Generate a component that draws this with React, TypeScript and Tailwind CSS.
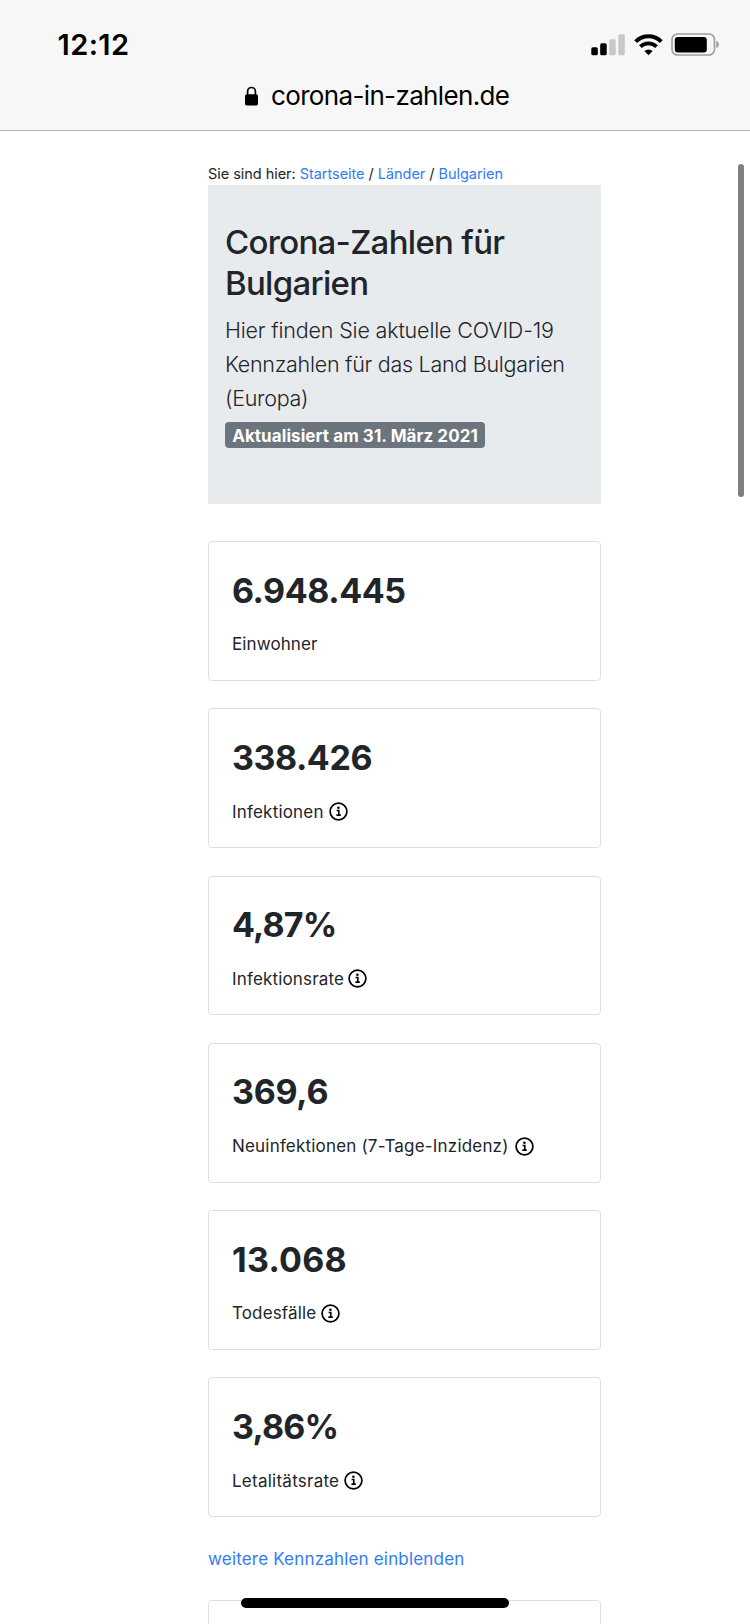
type Stat = {
  value: string;
  label: string;
  info: boolean;
  valueClass: string;
  labelClass: string;
};

const stats: Stat[] = [
  { value: "6.948.445", label: "Einwohner", info: false, valueClass: "tracking-[-0.45px]", labelClass: "tracking-[0.1px]" },
  { value: "338.426", label: "Infektionen", info: true, valueClass: "tracking-[-0.45px]", labelClass: "tracking-[0.2px]" },
  { value: "4,87%", label: "Infektionsrate", info: true, valueClass: "tracking-[-0.85px]", labelClass: "tracking-[0.16px] mr-[-0.7px]" },
  { value: "369,6", label: "Neuinfektionen (7-Tage-Inzidenz)", info: true, valueClass: "tracking-[-0.25px]", labelClass: "tracking-[0.19px] mr-[1px]" },
  { value: "13.068", label: "Todesfälle", info: true, valueClass: "tracking-[0.25px]", labelClass: "tracking-[0.14px] mr-[-0.7px]" },
  { value: "3,86%", label: "Letalitätsrate", info: true, valueClass: "tracking-[-0.85px]", labelClass: "tracking-[0.25px]" },
];

function InfoIcon() {
  return (
    <svg className="w-[19px] h-[19px] ml-[5px] shrink-0" viewBox="0 0 19 19" fill="none">
      <circle cx="9.5" cy="9.5" r="8.4" stroke="#000" strokeWidth="1.7" />
      <circle cx="9.4" cy="5.8" r="1.3" fill="#000" />
      <path d="M7.6 8.5H9.8V12.8M7.4 13.1H11.8" stroke="#000" strokeWidth="1.6" />
    </svg>
  );
}

function StatCard({ stat }: { stat: Stat }) {
  return (
    <div className="h-[139.8px] border border-[#dfdfdf] rounded-[4px] pl-[23px] pt-[27.5px]">
      <div className={`text-[34px] leading-[42px] font-bold ${stat.valueClass}`}>{stat.value}</div>
      <div className="flex items-center h-[26px] mt-[19.8px]">
        <span className={`text-[17px] leading-[26px] ${stat.labelClass}`}>{stat.label}</span>
        {stat.info && <InfoIcon />}
      </div>
    </div>
  );
}

function StatusBar() {
  return (
    <div className="flex items-center justify-between h-[90px] pl-[57.5px] pr-[30px]">
      <span className="text-[29px] leading-[36px] font-semibold tracking-[0.4px]">12:12</span>
      <div className="flex items-center">
        <svg className="w-[34px] h-[22px]" viewBox="0 0 34 22">
          <rect x="0.3" y="13.2" width="6.5" height="8" rx="1.5" />
          <rect x="9.2" y="9.2" width="6.5" height="12" rx="1.5" />
          <rect x="18.2" y="5.2" width="6.5" height="16" rx="1.5" fill="#c8c8c8" />
          <rect x="27.3" y="0.2" width="6.5" height="21" rx="1.5" fill="#c8c8c8" />
        </svg>
        <svg className="w-[29px] h-[22px] ml-[8.5px]" viewBox="0 0 29 22" fill="none">
          <path d="M1.7 7.6A18.2 18.2 0 0 1 27.3 7.6" stroke="#000" strokeWidth="4" />
          <path d="M6.4 12.6A11.6 11.6 0 0 1 22.6 12.6" stroke="#000" strokeWidth="3.8" />
          <path d="M14.5 21.2L10.4 17.1A6 6 0 0 1 18.6 17.1Z" fill="#000" />
        </svg>
        <svg className="w-[49px] h-[24px] ml-[8.5px]" viewBox="0 0 49 24" fill="none">
          <rect x="1" y="1" width="42.5" height="21" rx="5.5" stroke="#9d9d9d" strokeWidth="1.6" />
          <rect x="3.8" y="4" width="32" height="15.5" rx="3" fill="#000" />
          <path d="M45.3 8C48.8 9.1 48.8 13.9 45.3 15Z" fill="#9d9d9d" />
        </svg>
      </div>
    </div>
  );
}

export default function App() {
  return (
    <div className="relative w-[750px] h-[1624px] overflow-hidden bg-white text-[#212529] font-[Inter,sans-serif]">
      <header className="h-[131px] bg-[#f7f7f7] border-b border-[#b2b2b2] text-black">
        <StatusBar />
        <div className="flex items-center h-[12px] pl-[245px]">
          <svg className="w-[13px] h-[20px]" viewBox="0 0 13 20" fill="none">
            <path d="M2.6 9V5.5a3.9 4 0 0 1 7.8 0V9" stroke="#000" strokeWidth="1.7" />
            <rect x="0" y="8.3" width="13" height="11.2" rx="1.8" fill="#000" />
          </svg>
          <span className="ml-[13px] text-[26px] leading-[32px] tracking-[-0.65px] whitespace-nowrap">
            corona-in-zahlen.de
          </span>
        </div>
      </header>

      <main className="w-[393px] ml-[208px] pt-[32px] whitespace-nowrap">
        <nav className="h-[22px] text-[14.5px] leading-[22px] tracking-[-0.04px]">
          Sie sind hier: <a className="text-[#2f7cf6]">Startseite</a> / <a className="text-[#2f7cf6]">Länder</a> /{" "}
          <a className="text-[#2f7cf6]">Bulgarien</a>
        </nav>

        <section className="h-[318.5px] bg-[#e8ebee] pl-[17px] pt-[36.5px]">
          <h1 className="text-[33px] leading-[41.5px] font-medium tracking-[-0.7px]">
            Corona-Zahlen für
            <br />
            Bulgarien
          </h1>
          <p className="mt-[8.5px] text-[21.5px] leading-[34.2px] font-light tracking-[-0.28px]">
            <span className="tracking-[-0.18px]">Hier finden Sie aktuelle COVID-19</span>
            <br />
            Kennzahlen für das Land Bulgarien
            <br />
            (Europa)
          </p>
          <div className="flex items-center justify-center w-[260px] h-[26px] mt-[6px] rounded-[4px] bg-[#6c757d] text-white text-[17px] leading-[26px] pt-[2px] font-bold tracking-[0.07px]">
            Aktualisiert am 31. März 2021
          </div>
        </section>

        <div className="flex flex-col gap-[27.5px] mt-[37.5px]">
          {stats.map((stat) => (
            <StatCard key={stat.label} stat={stat} />
          ))}
        </div>

        <a className="block mt-[29px] text-[17px] leading-[26px] tracking-[0.18px] text-[#2f7cf6]">
          weitere Kennzahlen einblenden
        </a>
        <div className="h-[140px] mt-[28px] border border-[#dfdfdf] rounded-[4px]" />
      </main>

      <div className="absolute left-[738px] top-[164px] w-[6px] h-[333px] rounded-full bg-[#7f7f7f]" />
      <div className="absolute left-[241px] top-[1598px] w-[268px] h-[10px] rounded-full bg-black" />
    </div>
  );
}
